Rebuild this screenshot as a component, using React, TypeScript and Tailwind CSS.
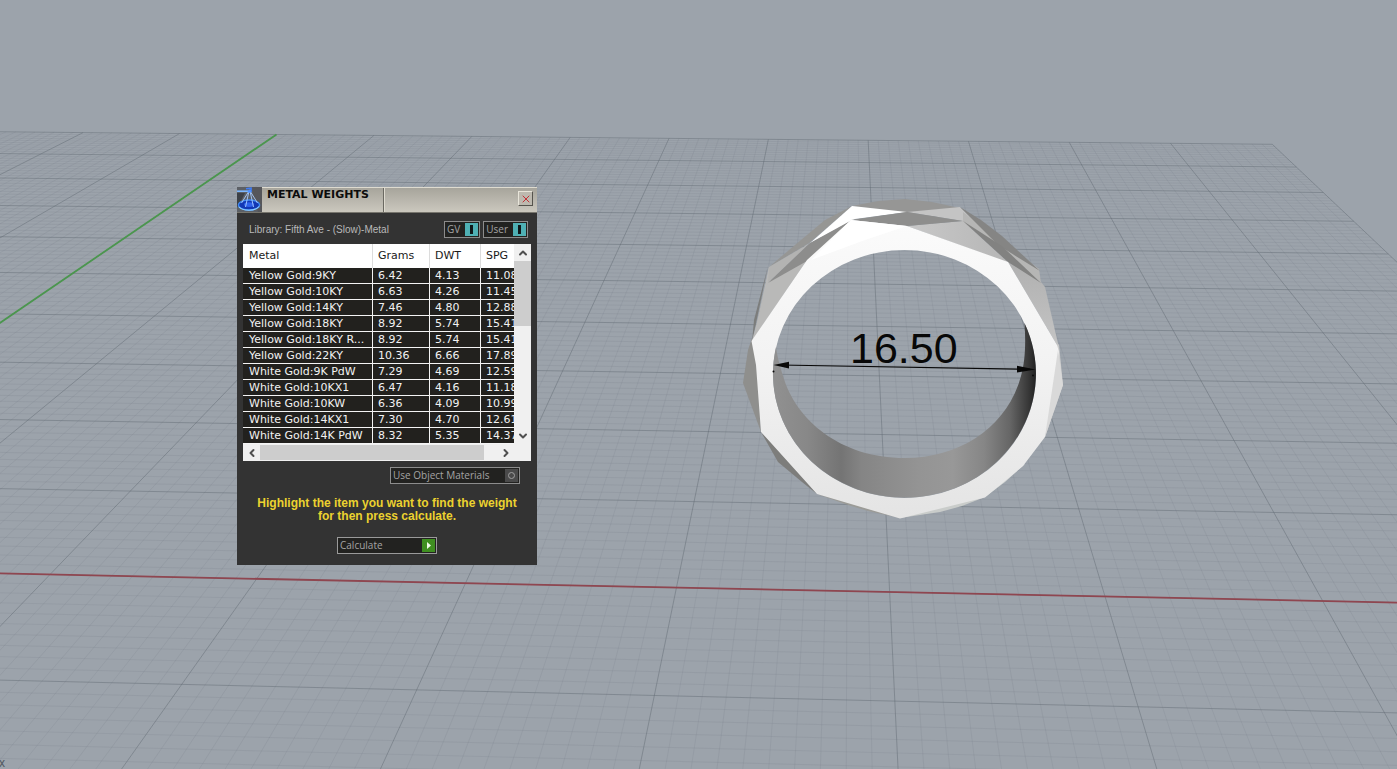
import { useState } from 'react';
import { clsx } from 'clsx';
import { ChevronDown, ChevronLeft, ChevronRight, ChevronUp, X } from 'lucide-react';

interface MetalWeight {
  metal: string;
  grams: string;
  dwt: string;
  spg: string;
}

const METALS: MetalWeight[] = [
  { metal: 'Yellow Gold:9KY', grams: '6.42', dwt: '4.13', spg: '11.08' },
  { metal: 'Yellow Gold:10KY', grams: '6.63', dwt: '4.26', spg: '11.45' },
  { metal: 'Yellow Gold:14KY', grams: '7.46', dwt: '4.80', spg: '12.88' },
  { metal: 'Yellow Gold:18KY', grams: '8.92', dwt: '5.74', spg: '15.41' },
  { metal: 'Yellow Gold:18KY R...', grams: '8.92', dwt: '5.74', spg: '15.41' },
  { metal: 'Yellow Gold:22KY', grams: '10.36', dwt: '6.66', spg: '17.89' },
  { metal: 'White Gold:9K PdW', grams: '7.29', dwt: '4.69', spg: '12.59' },
  { metal: 'White Gold:10KX1', grams: '6.47', dwt: '4.16', spg: '11.18' },
  { metal: 'White Gold:10KW', grams: '6.36', dwt: '4.09', spg: '10.99' },
  { metal: 'White Gold:14KX1', grams: '7.30', dwt: '4.70', spg: '12.61' },
  { metal: 'White Gold:14K PdW', grams: '8.32', dwt: '5.35', spg: '14.37' },
];

// Ground plane to screen. s runs right to left, v runs from the far edge towards the camera.
function project(s: number, v: number) {
  const w = 1 + 0.0024588 * s - 0.053808 * v;
  const x = (1272.3 - 98.9001 * s - 45.701 * v) / w;
  const y = (144.3 - 0.64929 * s + 13.7568 * v) / w;
  return `${x.toFixed(2)} ${y.toFixed(2)}`;
}

const GRID_WIDTH = 20;
const GRID_DEPTH = 12.5;

function gridPath(keep: (i: number) => boolean) {
  let d = '';
  for (let i = 0; i <= GRID_WIDTH * 10; i++) {
    if (keep(i)) d += `M${project(i / 10, 0)}L${project(i / 10, GRID_DEPTH)}`;
  }
  for (let i = 0; i <= GRID_DEPTH * 10; i++) {
    if (keep(i)) d += `M${project(0, i / 10)}L${project(GRID_WIDTH, i / 10)}`;
  }
  return d;
}

const MINOR_GRID = gridPath((i) => i % 10 !== 0);
const MAJOR_GRID = gridPath((i) => i % 10 === 0);
const Y_AXIS = `M${project(10, 0)}L${project(10, 10)}`;
const X_AXIS = `M${project(0, 10)}L${project(GRID_WIDTH, 10)}`;

function Ring() {
  return (
    <g>
      <defs>
        <linearGradient id="face" x1="0" y1="220" x2="0" y2="518" gradientUnits="userSpaceOnUse">
          <stop offset="0" stopColor="#fbfbfb" />
          <stop offset="0.5" stopColor="#f2f2f2" />
          <stop offset="1" stopColor="#e4e4e4" />
        </linearGradient>
        <linearGradient id="bore" x1="776" y1="0" x2="1036" y2="0" gradientUnits="userSpaceOnUse">
          <stop offset="0" stopColor="#909090" />
          <stop offset="0.12" stopColor="#888888" />
          <stop offset="0.25" stopColor="#747474" />
          <stop offset="0.33" stopColor="#858585" />
          <stop offset="0.55" stopColor="#949494" />
          <stop offset="0.68" stopColor="#989898" />
          <stop offset="0.8" stopColor="#868686" />
          <stop offset="0.9" stopColor="#666666" />
          <stop offset="0.97" stopColor="#383838" />
          <stop offset="1" stopColor="#222222" />
        </linearGradient>
        <linearGradient id="side" x1="0" y1="262" x2="0" y2="345" gradientUnits="userSpaceOnUse">
          <stop offset="0" stopColor="#b0b0b0" />
          <stop offset="1" stopColor="#c4c4c4" />
        </linearGradient>
        <linearGradient id="shoulder" x1="907" y1="0" x2="1008" y2="0" gradientUnits="userSpaceOnUse">
          <stop offset="0" stopColor="#c8c8c8" />
          <stop offset="1" stopColor="#b6b6b6" />
        </linearGradient>
      </defs>

      {/* far facets along the outside */}
      <polygon points="752,338 748,350 743,383 761,432 757,360" fill="#8f8f8d" />
      <polygon points="761,432 778,462 802,482 817,494 790,462" fill="#7d7d7b" />
      <polygon points="817,494 845,504 868,511 900,518 862,502" fill="#9b9b97" />
      <polygon points="900,518 940,512 962,506 985,497 945,500" fill="#c9ccca" />
      <polygon points="1057,343 1059,345 1063,385 1045,437 1050,400" fill="#cfcfcf" />
      <polygon points="985,497 1005,482 1025,464 1010,470" fill="#d3d6d4" />
      <polygon points="769,267 795,245 825,220 852,206 809,243" fill="#969694" />
      <polygon points="852,206 878,201 905,199 932,202 960,208 907,213" fill="#969695" />
      <polygon points="768,266 762,295 752,342 754,320" fill="#7c7d7c" />
      <polygon points="769,266 769,284 753,341 764,290" fill="#b9b9b8" />

      {/* cut facets on the shoulders */}
      <polygon points="769,267 810,243 768,283" fill="#b3b3b2" />
      <polygon points="852,206 907,212 855,219 809,244" fill="#ffffff" />
      <polygon points="907,212 960,207 1000,246 963,221" fill="#c4c4c4" />
      <polygon points="963,212 1039,269 1041,283 963,222" fill="#b6b6b5" />
      <polygon points="960,207 981,220 1002,236 1040,271 998,245" fill="#858584" />
      <polygon points="768,282 807,260 752,341" fill="#b9b9b8" />
      <polygon points="768,283 810,243 852,220 807,261" fill="#8d8d8c" />
      <polygon points="907,226 963,221 1009,263" fill="url(#shoulder)" />
      <polygon points="1008,262 1041,282 1045,287 1059,348 1057,345" fill="url(#side)" />
      <polygon points="963,221 1002,246 1041,283 1008,262" fill="#828281" />
      <polygon points="851,220 907,212 963,221 907,226" fill="#8e8e8d" />

      {/* front face with the finger hole cut out */}
      <path
        fill="url(#face)"
        fillRule="evenodd"
        d="M751.5 341L807 260L851 220L907 226L1008 262L1057 345L1059 352L1054 395L1045 437L1023 466L985 497.5L900 518.5L817 494L761 432L756 365Z
           M773 374A131.5 124 0 0 0 1036 374A131.5 124 0 0 0 773 374Z"
      />
      <polygon points="851,220 907,226 865,240 811,260" fill="#ffffff" />
      <polygon points="1058,350 1063,385 1045,437" fill="#d9d9d9" />
      <path
        fill="url(#bore)"
        d="M776 347A131.5 124 0 1 0 1024.5 323C1026 345 1025 362 1021 376C1008 425 962 458 905 458C840 458 796 420 783 376C779 363 777 355 776 347Z"
      />
    </g>
  );
}

function Dimension() {
  return (
    <g fill="#080808">
      <path d="M780 365L1030 369.3" stroke="#080808" strokeWidth="1.2" />
      <polygon points="773.5,365 789,361.8 789,368.6" />
      <polygon points="1035.5,369.4 1017,365.8 1017,372.4" />
      <circle cx="773.5" cy="371.5" r="1" />
      <circle cx="1033" cy="375.5" r="1" />
      <text x="850" y="363" fontSize="43" fontFamily="'Liberation Sans', Arial, sans-serif">
        16.50
      </text>
    </g>
  );
}

function Viewport() {
  return (
    <svg className="h-full w-full" viewBox="0 0 1397 769" preserveAspectRatio="xMidYMid slice">
      <path d={MINOR_GRID} fill="none" stroke="#6f7881" strokeOpacity="0.16" />
      <path d={MAJOR_GRID} fill="none" stroke="#5f6871" strokeOpacity="0.45" />
      <path d={X_AXIS} fill="none" stroke="#8f4650" strokeWidth="1.8" />
      <path d={Y_AXIS} fill="none" stroke="#4b964e" strokeWidth="1.8" />
      <Ring />
      <Dimension />
      <text x="-1" y="767" fontSize="12" fill="#50575e" fontFamily="'Liberation Sans', Arial, sans-serif">
        x
      </text>
    </svg>
  );
}

function ScaleIcon() {
  return (
    <svg className="h-full w-[25px] shrink-0" viewBox="0 0 25 25">
      <rect width="25" height="25" fill="#5c6066" />
      <path d="M0 6H8L2 18L0 20Z" fill="#3c4046" />
      <path d="M15 0H25V25H21L16 8Z" fill="#55565a" />
      <ellipse cx="12" cy="18" rx="10.6" ry="5" fill="#1238b4" stroke="#3f8cf5" strokeWidth="1.3" />
      <ellipse cx="12" cy="17.6" rx="5" ry="2.4" fill="#2f63ec" />
      <path d="M2 20C6 24.4 18 24.4 22 19.500" fill="none" stroke="#8fd0ff" strokeWidth="1.1" />
      <path d="M0 4.200H11" stroke="#7db8ff" strokeWidth="1.600" />
      <path d="M9 1.800L14 1.200V5" fill="none" stroke="#3f7df8" strokeWidth="1.600" />
      <path d="M12 4L4.500 16M12 4L8.500 20M13 4L16.500 20M13 4L20.500 16" fill="none" stroke="#a9cdff" strokeWidth="0.900" />
      <circle cx="12.500" cy="4.300" r="1.700" fill="#4f90ff" />
    </svg>
  );
}

interface ToggleProps {
  label: string;
  on: boolean;
  onToggle: () => void;
}

function Toggle({ label, on, onToggle }: ToggleProps) {
  return (
    <button
      type="button"
      aria-pressed={on}
      onClick={onToggle}
      className="flex h-[17px] items-center gap-[5px] border border-[#8c8c8c] bg-[#222220] pr-px pl-0.5 text-[10px] leading-[15px] text-[#a4a4a4]"
    >
      {label}
      <span className={clsx('flex h-[13px] w-[13px] items-center justify-center', on ? 'bg-[#4fb0b4]' : 'bg-[#555555]')}>
        <span className="h-[9px] w-[3px] bg-[#10181a]" />
      </span>
    </button>
  );
}

function WeightsTable() {
  const [selected, setSelected] = useState<number | null>(null);

  return (
    <div className="mt-1.5 bg-[#f0f0f0] font-['DejaVu_Sans',Verdana,sans-serif] text-[11px]">
      <div className="flex">
        <div className="min-w-0 flex-1 overflow-hidden">
          <table className="w-[294px] table-fixed border-separate border-spacing-0 text-left leading-[14px] whitespace-nowrap">
            <colgroup>
              <col className="w-[130px]" />
              <col className="w-[57px]" />
              <col className="w-[51px]" />
              <col className="w-[56px]" />
            </colgroup>
            <thead>
              <tr className="h-6 bg-white text-[#1a1a1a]">
                <th className="border-r border-[#dcdcdc] p-0 pl-1.5 font-normal">Metal</th>
                <th className="border-r border-[#dcdcdc] p-0 pl-[5px] font-normal">Grams</th>
                <th className="border-r border-[#dcdcdc] p-0 pl-[5px] font-normal">DWT</th>
                <th className="p-0 pl-[5px] font-normal">SPG</th>
              </tr>
            </thead>
            <tbody>
              {METALS.map((row, i) => (
                <tr
                  key={row.metal}
                  onClick={() => setSelected(i)}
                  className={clsx('h-4 text-[#f2f2f2]', selected === i ? 'bg-[#2f6fb5]' : 'bg-[#22211e]')}
                >
                  <td className="border-r border-b border-[#f4f4f4] p-0 pt-px pl-1.5">{row.metal}</td>
                  <td className="border-r border-b border-[#f4f4f4] p-0 pt-px pl-[5px]">{row.grams}</td>
                  <td className="border-r border-b border-[#f4f4f4] p-0 pt-px pl-[5px]">{row.dwt}</td>
                  <td className="border-b border-[#f4f4f4] p-0 pt-px pl-[5px]">{row.spg}</td>
                </tr>
              ))}
            </tbody>
          </table>
        </div>
        <div className="flex w-[17px] flex-col">
          <button type="button" aria-label="Scroll up" className="flex h-[17px] items-center justify-center text-[#505050]">
            <ChevronUp className="h-3 w-3" strokeWidth={4} />
          </button>
          <div className="flex-1">
            <div className="h-[65px] bg-[#cdcdcd]" />
          </div>
          <button type="button" aria-label="Scroll down" className="flex h-[17px] items-center justify-center text-[#505050]">
            <ChevronDown className="h-3 w-3" strokeWidth={4} />
          </button>
        </div>
      </div>
      <div className="flex h-[17px] pr-[17px]">
        <button type="button" aria-label="Scroll left" className="flex w-[17px] items-center justify-center text-[#505050]">
          <ChevronLeft className="h-3 w-3" strokeWidth={4} />
        </button>
        <div className="flex-1 py-px pr-[13px]">
          <div className="h-full bg-[#cdcdcd]" />
        </div>
        <button type="button" aria-label="Scroll right" className="flex w-[17px] items-center justify-center text-[#505050]">
          <ChevronRight className="h-3 w-3" strokeWidth={4} />
        </button>
      </div>
    </div>
  );
}

function MetalWeightsWindow() {
  const [gv, setGv] = useState(true);
  const [user, setUser] = useState(true);

  return (
    <section className="absolute top-[187px] left-[237px] w-[300px] bg-[#333333] font-['Open_Sans',Tahoma,sans-serif]">
      <header className="flex h-[26px] border-b border-[#77756d] bg-linear-to-b from-[#a5a39a] to-[#cbc8be]">
        <ScaleIcon />
        <div className="flex flex-1 border-t border-[#dedbd0] pl-[5px]">
          <h1 className="w-[117px] border-r border-[#6b6962] pt-px font-['DejaVu_Sans',Verdana,sans-serif] text-[11px] leading-3 font-bold whitespace-nowrap text-[#0c0c0c]">
            METAL WEIGHTS
          </h1>
          <div className="flex flex-1 items-start justify-end border-l border-[#dedbd0] pt-[3px] pr-1">
            <button
              type="button"
              aria-label="Close"
              className="flex h-[15px] w-[15px] items-center justify-center border border-t-[#e8e5da] border-r-[#55534d] border-b-[#55534d] border-l-[#e8e5da] bg-[#bdb9af] text-[#c42f35]"
            >
              <X className="h-3 w-3 shrink-0" strokeWidth={2} />
            </button>
          </div>
        </div>
      </header>

      <div className="flex flex-col px-1.5 pt-2 pb-[11px]">
        <div className="flex items-center gap-[3px] pr-[3px] pl-1.5">
          <p className="flex-1 font-['Liberation_Sans',Arial,sans-serif] text-[10px] leading-3 text-[#b9b9b9]">
            Library: Fifth Ave - (Slow)-Metal
          </p>
          <Toggle label="GV" on={gv} onToggle={() => setGv(!gv)} />
          <Toggle label="User" on={user} onToggle={() => setUser(!user)} />
        </div>

        <WeightsTable />

        <button
          type="button"
          className="mt-1.5 mr-[11px] flex h-[17px] w-[130px] items-center justify-between self-end border border-[#8c8c8c] bg-[#222220] pr-px pl-0.5 text-[10px] leading-[15px] text-[#a4a4a4]"
        >
          Use Object Materials
          <span className="flex h-[13px] w-[13px] items-center justify-center bg-[#4a4a4a]">
            <span className="h-[7px] w-[7px] rounded-full border border-[#a0a0a0]" />
          </span>
        </button>

        <p className="mt-[13px] text-center font-['Liberation_Sans',Arial,sans-serif] text-[12px] leading-[13px] font-bold whitespace-nowrap text-[#ecd22f]">
          Highlight the item you want to find the weight
          <br />
          for then press calculate.
        </p>

        <button
          type="button"
          className="mt-3.5 flex h-[17px] w-[100px] items-center justify-between self-center border border-[#9a9a9a] bg-[#222220] pr-px pl-0.5 text-[10px] leading-[15px] text-[#a4a4a4]"
        >
          Calculate
          <span className="flex h-[13px] w-[13px] items-center justify-center bg-[#3f8f20]">
            <svg className="h-[7px] w-1" viewBox="0 0 4 7">
              <path d="M0 0L4 3.5L0 7Z" fill="#f0fbe8" />
            </svg>
          </span>
        </button>
      </div>
    </section>
  );
}

export default function App() {
  return (
    <main className="relative h-screen overflow-hidden bg-[#9ca3ab]">
      <Viewport />
      <MetalWeightsWindow />
    </main>
  );
}
